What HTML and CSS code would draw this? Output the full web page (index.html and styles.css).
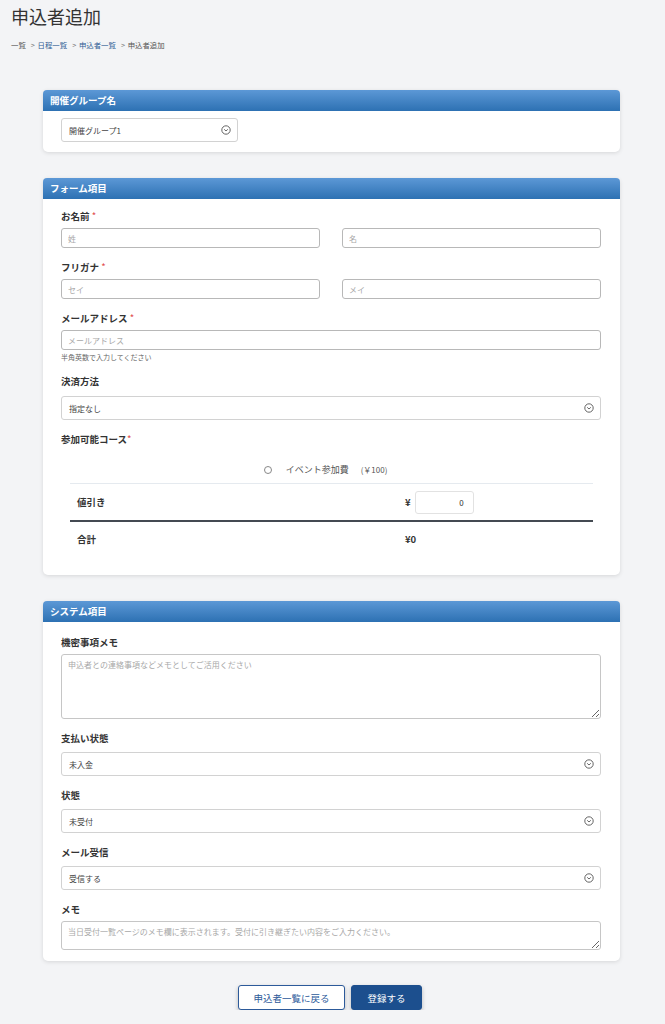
FILE: index.html
```html
<!DOCTYPE html>
<html lang="ja">
<head>
  <meta charset="UTF-8">
  <title>申込者追加</title>
  <link rel="stylesheet" href="styles.css">
</head>
<body>
  <h1 class="page-title">申込者追加</h1>
  <div class="breadcrumb">
    <span class="crumb">一覧</span><span class="sep">&gt;</span>
    <a class="crumb link">日程一覧</a><span class="sep">&gt;</span>
    <a class="crumb link">申込者一覧</a><span class="sep">&gt;</span>
    <span class="crumb">申込者追加</span>
  </div>

  <div class="wrap">
    <div class="card">
      <div class="card-head">開催グループ名</div>
      <div class="card-body group-body">
        <div class="select small">
          <span>開催グループ1</span>
          <svg viewBox="0 0 10 10"><circle cx="5" cy="5" r="4.2"/><polyline points="3.2,4.3 5,6 6.8,4.3"/></svg>
        </div>
      </div>
    </div>

    <div class="card">
      <div class="card-head">フォーム項目</div>
      <div class="card-body form-body">
        <div class="field">
          <label class="lbl">お名前 <span class="req">*</span></label>
          <div class="two-col">
            <input type="text" placeholder="姓">
            <input type="text" placeholder="名">
          </div>
        </div>
        <div class="field">
          <label class="lbl">フリガナ <span class="req">*</span></label>
          <div class="two-col">
            <input type="text" placeholder="セイ">
            <input type="text" placeholder="メイ">
          </div>
        </div>
        <div class="field">
          <label class="lbl">メールアドレス <span class="req">*</span></label>
          <input type="text" placeholder="メールアドレス">
          <div class="hint">半角英数で入力してください</div>
        </div>
        <div class="field">
          <label class="lbl">決済方法</label>
          <div class="select wide-gap">
            <span>指定なし</span>
            <svg viewBox="0 0 10 10"><circle cx="5" cy="5" r="4.2"/><polyline points="3.2,4.3 5,6 6.8,4.3"/></svg>
          </div>
        </div>
        <div class="field course">
          <label class="lbl">参加可能コース<span class="req">*</span></label>
          <div class="course-table">
            <div class="course-row">
              <span class="radio"></span>
              <span class="course-name">イベント参加費</span>
              <span class="course-price">(￥100)</span>
            </div>
            <div class="sum-row discount">
              <span class="sum-lbl">値引き</span>
              <span class="sum-val">¥ <input class="disc" type="text" value="0"></span>
            </div>
            <div class="sum-row total">
              <span class="sum-lbl">合計</span>
              <span class="sum-val">¥0</span>
            </div>
          </div>
        </div>
      </div>
    </div>

    <div class="card">
      <div class="card-head">システム項目</div>
      <div class="card-body sys-body">
        <div class="field">
          <label class="lbl">機密事項メモ</label>
          <textarea class="memo-lg" placeholder="申込者との連絡事項などメモとしてご活用ください"></textarea>
        </div>
        <div class="field">
          <label class="lbl">支払い状態</label>
          <div class="select">
            <span>未入金</span>
            <svg viewBox="0 0 10 10"><circle cx="5" cy="5" r="4.2"/><polyline points="3.2,4.3 5,6 6.8,4.3"/></svg>
          </div>
        </div>
        <div class="field">
          <label class="lbl">状態</label>
          <div class="select">
            <span>未受付</span>
            <svg viewBox="0 0 10 10"><circle cx="5" cy="5" r="4.2"/><polyline points="3.2,4.3 5,6 6.8,4.3"/></svg>
          </div>
        </div>
        <div class="field">
          <label class="lbl">メール受信</label>
          <div class="select">
            <span>受信する</span>
            <svg viewBox="0 0 10 10"><circle cx="5" cy="5" r="4.2"/><polyline points="3.2,4.3 5,6 6.8,4.3"/></svg>
          </div>
        </div>
        <div class="field last">
          <label class="lbl">メモ</label>
          <textarea class="memo-sm" placeholder="当日受付一覧ページのメモ欄に表示されます。受付に引き継ぎたい内容をご入力ください。"></textarea>
        </div>
      </div>
    </div>

    <div class="actions">
      <button class="btn btn-back">申込者一覧に戻る</button>
      <button class="btn btn-save">登録する</button>
    </div>
  </div>
</body>
</html>
```

FILE: styles.css
```css
body {
  margin: 0;
  background: #f3f4f6;
  font-family: "Noto Sans CJK JP", "Noto Sans", sans-serif;
  color: #333;
}

.page-title {
  margin: 0;
  padding: 5px 11px 0;
  font-size: 18px;
  font-weight: normal;
  line-height: 22px;
  color: #333;
}

.breadcrumb {
  margin-top: 13px;
  padding: 0 11px;
  font-size: 7.4px;
  line-height: 10px;
  color: #555;
}

.breadcrumb .link {
  color: #2f5d95;
}

.breadcrumb .sep {
  margin: 0 1px 0 5px;
  color: #777;
}

.wrap {
  margin: 40px 45px 0 43px;
}

.card {
  background: #fff;
  border-radius: 5px;
  box-shadow: 0 1px 4px rgba(0,0,0,0.12);
  margin-bottom: 26px;
}

.card-head {
  height: 21px;
  line-height: 21px;
  padding: 0 7px;
  border-radius: 4px 4px 0 0;
  background: linear-gradient(to bottom, #5c98d6, #2d71b3);
  color: #fff;
  font-size: 9.5px;
  font-weight: bold;
}

.group-body {
  padding: 7px 18px 10px;
}

.form-body {
  padding: 11px 19px 20px 18px;
}

.sys-body {
  padding: 14px 19px 11px 18px;
}

.field {
  display: flex;
  flex-direction: column;
  margin-bottom: 13px;
}

.field.last, .field.course {
  margin-bottom: 0;
}

.lbl {
  display: block;
  font-size: 9.5px;
  font-weight: bold;
  line-height: 13px;
  margin-bottom: 5px;
  color: #333;
}

.req {
  color: #e04848;
  font-weight: normal;
}

.two-col {
  display: grid;
  grid-template-columns: 1fr 1fr;
  gap: 22px;
}

input[type="text"], textarea {
  display: block;
  box-sizing: border-box;
  width: 100%;
  height: 20px;
  padding: 0 6px;
  border: 1px solid #b8b8b8;
  border-radius: 3px;
  font-family: inherit;
  font-size: 8px;
  color: #333;
  background: #fff;
}

input::placeholder, textarea::placeholder {
  color: #a8a8a8;
}

textarea {
  padding: 4px 6px;
  border-color: #c6c6c6;
}

.memo-lg {
  height: 65px;
}

.memo-sm {
  height: 29px;
}

.hint {
  margin-top: 3px;
  font-size: 7px;
  line-height: 9px;
  color: #666;
}

.select {
  display: flex;
  align-items: center;
  justify-content: space-between;
  box-sizing: border-box;
  height: 24px;
  margin-top: 2px;
  padding: 0 6px 0 7px;
  border: 1px solid #d2d2d2;
  border-radius: 3px;
  font-size: 8px;
  color: #444;
  background: #fff;
}

.select.wide-gap {
  margin-top: 3px;
}

.select.small {
  width: 177px;
  margin-top: 0;
}

.select svg {
  width: 10px;
  height: 10px;
  fill: none;
  stroke: #555;
  stroke-width: 0.9;
}

.course .lbl {
  margin-bottom: 10px;
}

.course-table {
  margin: 0 8px 0 9px;
}

.course-row {
  display: flex;
  align-items: center;
  justify-content: center;
  height: 27px;
  border-bottom: 1px solid #e5eaef;
  font-size: 9px;
  color: #555;
  padding-right: 12px;
}

.radio {
  width: 6px;
  height: 6px;
  border: 1px solid #888;
  border-radius: 50%;
  margin-right: 14px;
}

.course-price {
  margin-left: 12px;
  font-size: 8px;
}

.sum-row {
  display: grid;
  grid-template-columns: 1fr 188px;
  align-items: center;
  padding-left: 7px;
  font-size: 9.5px;
  font-weight: bold;
  color: #333;
}

.sum-row.discount {
  height: 36px;
  border-bottom: 2px solid #444a52;
}

.sum-row.total {
  height: 33px;
}

.sum-val {
  display: flex;
  align-items: center;
  gap: 4px;
}

input.disc {
  width: 59px;
  height: 23px;
  border: 1px solid #e2e2e2;
  text-align: right;
  padding-right: 9px;
  font-weight: normal;
  color: #333;
}

.actions {
  display: flex;
  justify-content: center;
  gap: 6px;
  margin-top: -2px;
  padding-right: 3px;
}

.btn {
  height: 25px;
  border-radius: 3px;
  font-family: inherit;
  font-size: 9.5px;
  box-shadow: 0 2px 4px rgba(0,0,0,0.25);
  cursor: pointer;
}

.btn-back {
  width: 107px;
  background: #fff;
  border: 1px solid #2c5a9a;
  color: #2c5a9a;
}

.btn-save {
  width: 71px;
  background: #1c4f8e;
  border: 1px solid #1c4f8e;
  color: #fff;
}
```
